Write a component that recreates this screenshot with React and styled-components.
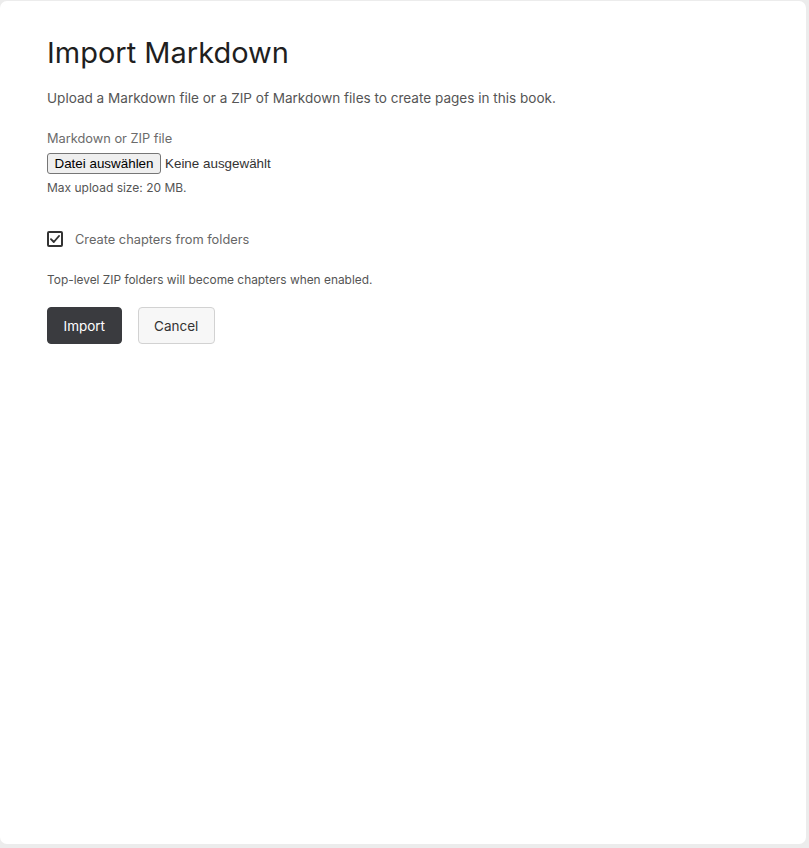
import React, { useState } from 'react'
import styled, { createGlobalStyle } from 'styled-components'

const GlobalStyle = createGlobalStyle`
  html, body {
    margin: 0;
    padding: 0;
    background: #ececec;
  }
  * {
    box-sizing: border-box;
  }
  #root {
    min-height: 100vh;
    display: flex;
  }
`

const App = () => {
  const [chapters, setChapters] = useState(true)

  return (
    <>
      <GlobalStyle />
      <Card>
        <Title>Import Markdown</Title>
        <Intro>
          Upload a Markdown file or a ZIP of Markdown files to create pages in
          this book.
        </Intro>

        <Field>
          <Label>Markdown or ZIP file</Label>
          <FilePicker>
            <FileButton type="button">Datei auswählen</FileButton>
            <FileName>Keine ausgewählt</FileName>
          </FilePicker>
          <Hint>Max upload size: 20 MB.</Hint>
        </Field>

        <CheckRow onClick={() => setChapters(c => !c)}>
          <CheckBox checked={chapters}>
            {chapters && (
              <svg width="10" height="8" viewBox="0 0 10 8">
                <path
                  d="M1 4.2 L3.8 7 L9 1"
                  fill="none"
                  stroke="#333"
                  strokeWidth="1.9"
                  strokeLinecap="round"
                  strokeLinejoin="round"
                />
              </svg>
            )}
          </CheckBox>
          <CheckLabel>Create chapters from folders</CheckLabel>
        </CheckRow>

        <Note>Top-level ZIP folders will become chapters when enabled.</Note>

        <Actions>
          <Button primary>Import</Button>
          <Button>Cancel</Button>
        </Actions>
      </Card>
    </>
  )
}

export default App

const Card = styled.main`
  flex: 1;
  margin: 1px 3px 4px 0;
  background: #fff;
  border-radius: 7px;
  padding: 30px 47px;
  font-family: Inter, 'Noto Sans', sans-serif;
  color: #222;
`

const Title = styled.h1`
  margin: 0;
  font-size: 29px;
  font-weight: 400;
  line-height: 44px;
  color: #1f1f1f;
`

const Intro = styled.p`
  margin: 13px 0 0;
  font-size: 13.55px;
  line-height: 20px;
  color: #555;
`

const Field = styled.div`
  margin-top: 22px;
  display: flex;
  flex-direction: column;
  align-items: flex-start;
`

const Label = styled.label`
  font-size: 12.8px;
  line-height: 18px;
  color: #6b6b6b;
`

const FilePicker = styled.div`
  margin-top: 5px;
  display: flex;
  align-items: center;
  gap: 4px;
  font-family: 'Liberation Sans', Arial, sans-serif;
  font-size: 13.4px;
`

const FileButton = styled.button`
  height: 21px;
  padding: 0 6.5px;
  font: inherit;
  color: #000;
  background: #efefef;
  border: 1px solid #767676;
  border-radius: 3px;
`

const FileName = styled.span`
  color: #333;
`

const Hint = styled.span`
  margin-top: 6px;
  font-size: 12px;
  line-height: 16px;
  color: #555;
`

const CheckRow = styled.div`
  margin-top: 35px;
  display: flex;
  align-items: center;
  gap: 12px;
  cursor: pointer;
`

const CheckBox = styled.span`
  width: 16px;
  height: 16px;
  border: 2px solid #333;
  border-radius: 2px;
  display: flex;
  align-items: center;
  justify-content: center;
  background: #fff;
`

const CheckLabel = styled.span`
  font-size: 12.8px;
  color: #666;
`

const Note = styled.p`
  margin: 25px 0 0;
  font-size: 11.9px;
  line-height: 16px;
  color: #555;
`

const Actions = styled.div`
  margin-top: 19px;
  display: flex;
  gap: 16px;
`

const Button = styled.button`
  height: 37px;
  padding: 0 15.5px;
  font-family: Inter, 'Noto Sans', sans-serif;
  font-size: 13.5px;
  border-radius: 4px;
  cursor: pointer;
  color: ${p => (p.primary ? '#fff' : '#333')};
  background: ${p => (p.primary ? '#3a3b3f' : '#f7f7f7')};
  border: 1px solid ${p => (p.primary ? '#3a3b3f' : '#d2d2d2')};
`
